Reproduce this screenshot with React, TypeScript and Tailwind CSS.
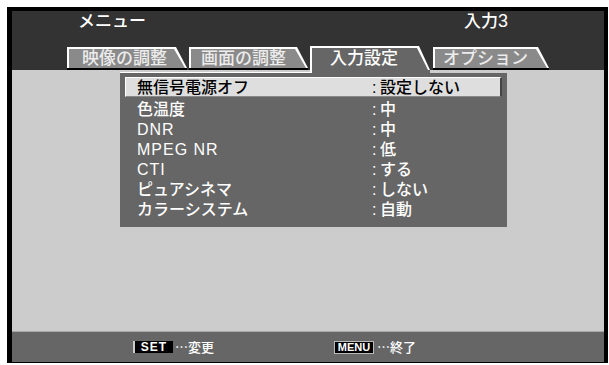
import React from "react";

const clip = "[clip-path:polygon(0_0,calc(100%_-_11px)_0,100%_100%,0_100%)]";

function InactiveTab({ label, w, pl }: { label: string; w: string; pl: string }) {
  return (
    <div className={`flex flex-col ${w}`}>
      <div className={`h-[21px] bg-white ${clip} pt-[2px] pl-[2px] pr-[2px]`}>
        <div className={`h-full bg-[#8a8a8a] ${clip} text-[#ececec] text-[17px] leading-[19px] ${pl}`}>{label}</div>
      </div>
      <div className="h-[2px] bg-black" />
    </div>
  );
}

const rows: [string, string, boolean][] = [
  ["色温度", "中", false],
  ["DNR", "中", true],
  ["MPEG NR", "低", true],
  ["CTI", "する", true],
  ["ピュアシネマ", "しない", false],
  ["カラーシステム", "自動", false],
];

export default function App() {
  return (
    <div
      className="w-[609px] h-[365px] bg-white pt-[7px] pl-[7px]"
      style={{ fontFamily: '"Liberation Sans", "Noto Sans CJK JP", sans-serif' }}
    >
      <div className="w-[601px] h-[356px] bg-black pt-[4px] pl-[5px] pr-[4px] pb-[1px] flex flex-col">
        {/* header */}
        <div className="h-[59px] bg-[#333333] flex flex-col shrink-0">
          <div className="h-[21px] flex items-center text-white text-[17px] font-medium">
            <span className="ml-[66px]">メニュー</span>
            <span className="ml-auto mr-[96px]">
              入力<span className="text-[18px]">3</span>
            </span>
          </div>
          <div className="flex-1 flex items-end pl-[55px] font-medium">
            <InactiveTab label="映像の調整" w="w-[120px]" pl="pl-[13px]" />
            <div className="ml-[2px]">
              <InactiveTab label="画面の調整" w="w-[119px]" pl="pl-[10px]" />
            </div>
            <div className={`ml-[2px] w-[120px] h-[24px] bg-white ${clip} pt-[2px] pl-[2px] pr-[2px]`}>
              <div className={`h-full bg-[#666666] ${clip} text-white text-[17px] leading-[22px] pl-[18px]`}>入力設定</div>
            </div>
            <div className="ml-[3px]">
              <InactiveTab label="オプション" w="w-[116px]" pl="pl-[8px]" />
            </div>
          </div>
        </div>

        {/* content */}
        <div className="h-[261px] bg-[#cccccc] shrink-0 pl-[108px]">
          <div className="w-[387px] flex flex-col">
            <div className="h-[3px] flex">
              <div className="w-[190px] bg-[#cccccc] border-b border-white" />
              <div className="w-[120px] bg-[#666666] border-l-2 border-white" />
              <div className="flex-1 bg-[#cccccc]" />
            </div>
            <div className="bg-[#666666] pt-[4px] pb-[7px] text-[16px] font-medium">
              <div className="mx-[5px] h-[20px] bg-[#dedede] border-t border-l border-white border-r-2 border-r-[#444] border-b border-b-[#888] flex items-center px-[11px] text-black leading-[18px] pt-[2px]">
                <span className="w-[235px]">無信号電源オフ</span>
                <span className="w-[8px]">:</span>
                <span>設定しない</span>
              </div>
              <div className="mt-[3px] flex flex-col text-white">
                {rows.map(([l, v, latin]) => (
                  <div key={l} className="h-[20px] leading-[20px] flex pl-[17px]">
                    <span className={latin ? "w-[235px] tracking-[1px]" : "w-[235px]"}>{l}</span>
                    <span className="w-[8px]">:</span>
                    <span>{v}</span>
                  </div>
                ))}
              </div>
            </div>
          </div>
        </div>

        {/* footer */}
        <div className="h-[31px] bg-[#666666] border-t border-[#a8a8a8] flex items-center text-white text-[13px] font-medium shrink-0">
          <div className="ml-[121px] flex items-center">
            <span className="w-[40px] h-[12px] bg-black border-l-2 border-[#cccccc] text-[12px] font-bold leading-[12px] text-center tracking-[1px]">SET</span>
            <span className="ml-[2px]" style={{ fontFamily: '"Noto Sans CJK JP", sans-serif' }}>…変更</span>
          </div>
          <div className="ml-[120px] flex items-center">
            <span className="w-[40px] h-[13px] bg-black border border-[#bbbbbb] text-[11px] font-bold leading-[11px] text-center">MENU</span>
            <span className="ml-[3px]" style={{ fontFamily: '"Noto Sans CJK JP", sans-serif' }}>…終了</span>
          </div>
        </div>
      </div>
    </div>
  );
}
